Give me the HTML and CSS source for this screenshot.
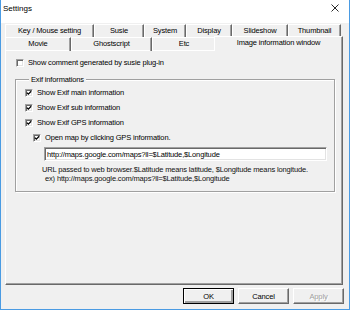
FILE: index.html
```html
<!DOCTYPE html>
<html lang="en">
<head>
  <meta charset="UTF-8">
  <title>Settings</title>
  <link rel="stylesheet" href="styles.css">
</head>
<body>
  <div class="window">
    <!-- Title bar -->
    <div class="titlebar">
      <span class="title">Settings</span>
      <svg class="close" width="8" height="8" viewBox="0 0 8 8">
        <path d="M0.5 0.5L7.5 7.5M7.5 0.5L0.5 7.5" stroke="#111" stroke-width="0.9" fill="none"/>
      </svg>
    </div>

    <div class="client">
      <!-- Tabs -->
      <div class="tabs">
        <div class="tab-row back">
          <div class="tab">Key / Mouse setting</div>
          <div class="tab">Susie</div>
          <div class="tab">System</div>
          <div class="tab">Display</div>
          <div class="tab">Slideshow</div>
          <div class="tab">Thumbnail</div>
        </div>
        <div class="tab-row front">
          <div class="tab">Movie</div>
          <div class="tab">Ghostscript</div>
          <div class="tab etc">Etc</div>
          <div class="tab selected">Image information window</div>
        </div>
      </div>

      <!-- Tab page -->
      <div class="panel">
        <label class="check">
          <span class="box"></span>Show comment generated by susie plug-in
        </label>

        <fieldset class="group">
          <legend>Exif informations</legend>
          <label class="check">
            <span class="box"><svg viewBox="0 0 6 6"><path d="M0.8 2.6L2.3 4.1L5.2 1.2" stroke="#000" stroke-width="1.3" fill="none"/></svg></span>Show Exif main information
          </label>
          <label class="check">
            <span class="box"><svg viewBox="0 0 6 6"><path d="M0.8 2.6L2.3 4.1L5.2 1.2" stroke="#000" stroke-width="1.3" fill="none"/></svg></span>Show Exif sub information
          </label>
          <label class="check">
            <span class="box"><svg viewBox="0 0 6 6"><path d="M0.8 2.6L2.3 4.1L5.2 1.2" stroke="#000" stroke-width="1.3" fill="none"/></svg></span>Show Exif GPS information
          </label>
          <label class="check indent">
            <span class="box"><svg viewBox="0 0 6 6"><path d="M0.8 2.6L2.3 4.1L5.2 1.2" stroke="#000" stroke-width="1.3" fill="none"/></svg></span>Open map by clicking GPS information.
          </label>
          <input class="url" type="text" value="http://maps.google.com/maps?ll=$Latitude,$Longitude">
          <p class="hint">URL passed to web browser.$Latitude means latitude, $Longitude means longitude.<span>ex) http://maps.google.com/maps?ll=$Latitude,$Longitude</span></p>
        </fieldset>
      </div>

      <!-- Dialog buttons -->
      <div class="buttons">
        <button class="btn default">OK</button>
        <button class="btn">Cancel</button>
        <button class="btn" disabled>Apply</button>
      </div>
    </div>
  </div>
</body>
</html>
```

FILE: styles.css
```css
* {
  box-sizing: border-box;
  margin: 0;
  padding: 0;
}

body {
  font-family: 'Liberation Sans', Arial, sans-serif;
  font-size: 7.5px;
  letter-spacing: -0.15px;
  color: #000;
  background: #fff;
}

/* Window frame */
.window {
  width: 350px;
  height: 310px;
  border: 1px solid #4a9be3;
  border-top: none;
  display: flex;
  flex-direction: column;
}

.titlebar {
  height: 23px;
  background: #fff;
  display: flex;
  justify-content: space-between;
  align-items: flex-start;
  padding: 4px 10px 0 2px;
}

.title {
  font-size: 8px;
  line-height: 9px;
  letter-spacing: 0;
}

.client {
  flex: 1;
  background: #f0f0f0;
  padding: 1px 5px 0 4px;
}

/* Tabs */
.tab-row {
  display: grid;
  height: 13px;
}

.tab-row.back {
  grid-template-columns: 89px 50px 42px 46px 56px 53px;
}

.tab-row.front {
  grid-template-columns: 66px 81px 64px 125px;
}

.tab {
  text-align: center;
  line-height: 12px;
  border-top: 1px solid #fff;
  border-left: 1px solid #fff;
  border-right: 1px solid #696969;
  box-shadow: inset -1px 0 #a0a0a0;
  white-space: nowrap;
}

.tab.etc {
  border-right-color: #e3e3e3;
  box-shadow: none;
}

.tab.selected {
  position: relative;
  margin: -1px -2px 0;
  height: 15px;
  line-height: 11px;
  background: #f0f0f0;
  z-index: 1;
}

/* Tab page */
.panel {
  width: 338px;
  height: 235px;
  border: 1px solid #fff;
  border-right-color: #696969;
  border-bottom-color: #696969;
  box-shadow: inset -1px -1px #a0a0a0;
  padding: 4px 0 0 10px;
}

.check {
  display: flex;
  align-items: center;
  height: 15px;
  white-space: nowrap;
}

.box {
  width: 8px;
  height: 8px;
  margin-right: 4px;
  background: #fff;
  border: 1px solid #a0a0a0;
  border-right-color: #fff;
  border-bottom-color: #fff;
  box-shadow: inset 1px 1px #696969, inset -1px -1px #e3e3e3;
  display: flex;
  align-items: center;
  justify-content: center;
}

.box svg {
  width: 6px;
  height: 6px;
}

.check.indent {
  margin-left: 8px;
}

/* Group box */
.group {
  width: 320px;
  margin: 5px 0 0 -1px;
  border: 1px solid #a0a0a0;
  box-shadow: inset 1px 1px #fff, 1px 1px #fff;
  padding: 1px 0 8px 9px;
}

.group legend {
  margin-left: 4px;
  padding: 0 2px;
  line-height: 9px;
  background: #f0f0f0;
}

.url {
  display: block;
  width: 283px;
  height: 14px;
  margin: 2px 0 0 19px;
  font-family: inherit;
  font-size: 7.5px;
  letter-spacing: -0.15px;
  padding: 1px 0 0 2px;
  color: #000;
  background: #fff;
  border: 1px solid #a0a0a0;
  border-right-color: #fff;
  border-bottom-color: #fff;
  box-shadow: inset 1px 1px #696969, inset -1px -1px #e3e3e3;
  outline: none;
}

.hint {
  margin: 4px 0 0 17px;
  line-height: 9px;
  color: #111;
}

.hint span {
  display: block;
  padding-left: 3px;
}

/* Buttons */
.buttons {
  display: flex;
  justify-content: flex-end;
  gap: 4px;
  margin-top: 3px;
}

.btn {
  width: 51px;
  height: 16px;
  font-family: inherit;
  font-size: 7.5px;
  letter-spacing: -0.15px;
  color: #000;
  background: #f0f0f0;
  border: 1px solid #fff;
  border-right-color: #696969;
  border-bottom-color: #696969;
  box-shadow: inset -1px -1px #a0a0a0;
}

.btn.default {
  border: 1px solid #000;
  box-shadow: inset 1px 1px #fff, inset -2px -2px #a0a0a0, inset -1px -1px #696969;
}

.btn:disabled {
  color: #a0a0a0;
  text-shadow: 1px 1px #fff;
}
```
